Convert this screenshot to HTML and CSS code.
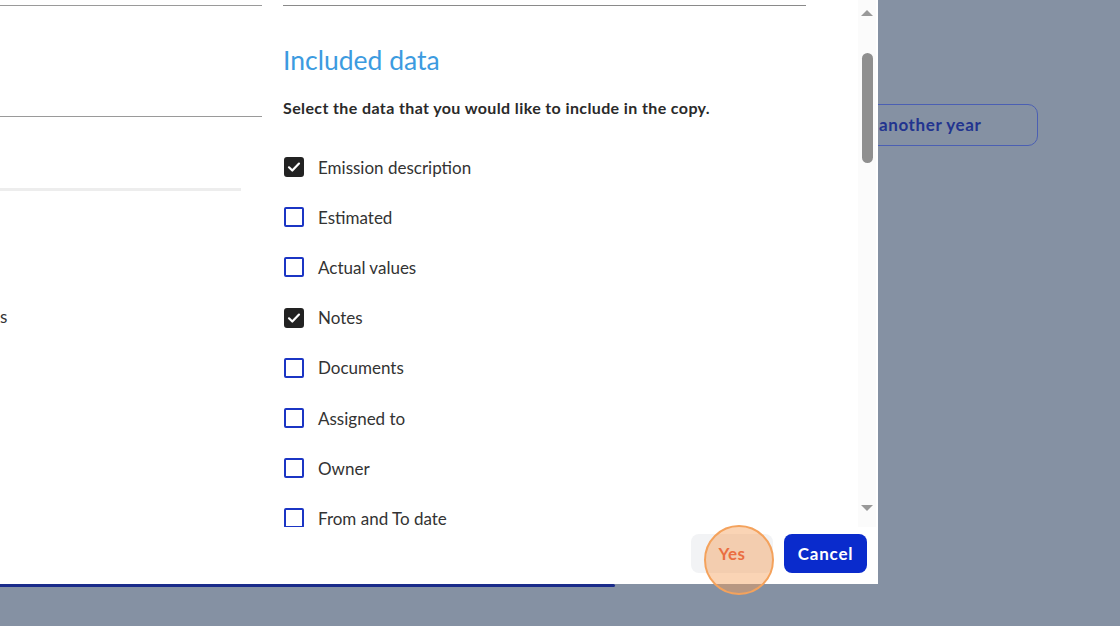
FILE: index.html
```html
<!DOCTYPE html>
<html lang="en">
<head>
<meta charset="utf-8">
<title>Included data</title>
<link rel="stylesheet" href="styles.css">
</head>
<body>
<div class="stage">
  <div class="top">
    <div class="modal">
      <div class="modal-body">
        <div class="backdrop-col">
          <div class="bg-line bg-line-1"></div>
          <div class="bg-line bg-line-2"></div>
          <div class="bg-line bg-line-3"></div>
          <div class="bg-text">s</div>
        </div>
        <div class="scroll-area">
          <div class="content">
            <div class="rule"></div>
            <h2 class="title">Included data</h2>
            <p class="subtitle">Select the data that you would like to include in the copy.</p>
            <ul class="options">
              <li class="option"><span class="box checked"><svg viewBox="0 0 20 20" width="20" height="20"><path d="M5 10.3l3.3 3.2L15 6.6" fill="none" stroke="#fff" stroke-width="2.2" stroke-linecap="round" stroke-linejoin="round"/></svg></span><span class="label">Emission description</span></li>
              <li class="option"><span class="box"></span><span class="label">Estimated</span></li>
              <li class="option"><span class="box"></span><span class="label">Actual values</span></li>
              <li class="option"><span class="box checked"><svg viewBox="0 0 20 20" width="20" height="20"><path d="M5 10.3l3.3 3.2L15 6.6" fill="none" stroke="#fff" stroke-width="2.2" stroke-linecap="round" stroke-linejoin="round"/></svg></span><span class="label">Notes</span></li>
              <li class="option"><span class="box"></span><span class="label">Documents</span></li>
              <li class="option"><span class="box"></span><span class="label">Assigned to</span></li>
              <li class="option"><span class="box"></span><span class="label">Owner</span></li>
              <li class="option"><span class="box"></span><span class="label">From and To date</span></li>
            </ul>
          </div>
          <div class="scrollbar">
            <span class="arrow up"></span>
            <div class="track"><div class="thumb"></div></div>
            <span class="arrow down"></span>
          </div>
        </div>
      </div>
      <div class="footer">
        <button class="btn btn-yes">Yes</button>
        <button class="btn btn-cancel">Cancel</button>
      </div>
      <div class="click-ring"></div>
    </div>
    <div class="page-right">
      <button class="outline-btn">another year</button>
    </div>
  </div>
  <div class="page-bar"></div>
</div>
</body>
</html>
```

FILE: styles.css
```css
* { box-sizing: border-box; }
html, body { margin: 0; padding: 0; }
body {
  width: 1120px;
  height: 626px;
  overflow: hidden;
  background: #8591a3;
  font-family: Lato, "Open Sans", "Liberation Sans", sans-serif;
  color: #2b2b2b;
}
.stage { display: flex; flex-direction: column; }
.top { display: flex; height: 584px; }

.modal {
  position: relative;
  width: 878px;
  height: 584px;
  background: #ffffff;
  display: flex;
  flex-direction: column;
}
.modal-body { display: flex; height: 527px; overflow: hidden; }

.backdrop-col { width: 262px; flex: none; }
.bg-line { height: 1px; background: #9a9a9a; }
.bg-line-1 { margin-top: 5px; }
.bg-line-2 { margin-top: 110px; }
.bg-line-3 { margin-top: 71px; height: 3px; width: 241px; background: #ededed; }
.bg-text { margin-top: 116px; font-size: 17px; line-height: 20px; color: #333; }

.scroll-area { flex: 1; display: flex; }
.content { width: 544px; padding-left: 21px; }
.rule { margin-top: 5px; height: 1px; background: #8a8a8a; }
.title {
  margin: 38px 0 0;
  font-size: 26.5px;
  line-height: 32px;
  font-weight: 400;
  color: #3c9be0;
}
.subtitle {
  margin: 22px 0 0;
  font-size: 16px;
  line-height: 20px;
  font-weight: 700;
  letter-spacing: 0.38px;
  color: #2a2a2a;
}
.options { list-style: none; margin: 24px 0 0; padding: 0; }
.option { height: 50.2px; display: flex; align-items: center; }
.box {
  width: 20px;
  height: 20px;
  margin-left: 1px;
  border: 2px solid #1b35c4;
  border-radius: 2px;
  flex: none;
  display: flex;
  align-items: center;
  justify-content: center;
}
.box.checked { background: #222; border-color: #222; border-radius: 3px; }
.box svg { flex: none; }
.label { margin-left: 14px; font-size: 17px; color: #333; }

.scrollbar {
  margin-left: 52px;
  width: 18px;
  display: flex;
  flex-direction: column;
  align-items: center;
  background: #fbfbfb;
}
.arrow { width: 0; height: 0; border-left: 6px solid transparent; border-right: 6px solid transparent; }
.arrow.up { margin-top: 10px; border-bottom: 6px solid #999; }
.arrow.down { margin-top: auto; margin-bottom: 16px; border-top: 6px solid #999; }
.track { width: 100%; display: flex; justify-content: center; }
.thumb { margin-top: 37px; width: 11px; height: 110px; border-radius: 6px; background: #8f8f8f; }

.footer {
  display: flex;
  justify-content: flex-end;
  gap: 11px;
  padding: 7px 11px 0 0;
}
.btn {
  height: 39px;
  border: none;
  border-radius: 8px;
  font-family: inherit;
  font-size: 17px;
  font-weight: 700;
  padding: 0;
}
.btn-yes { width: 82px; background: #f2f3f5; color: #e2462c; letter-spacing: 0.4px; }
.btn-cancel { width: 83px; background: #0a2bcc; color: #ffffff; letter-spacing: 0.8px; }

.click-ring {
  position: absolute;
  left: 704px;
  top: 525px;
  width: 70px;
  height: 70px;
  border-radius: 50%;
  background: rgba(245, 160, 90, 0.45);
  border: 2px solid #f4a25c;
}

.page-right { flex: 1; overflow: hidden; padding-top: 104px; }
.outline-btn {
  margin-left: -10px;
  width: 170px;
  height: 42px;
  border: 1px solid #4b5fb3;
  border-radius: 10px;
  background: transparent;
  color: #22348f;
  font-family: inherit;
  font-size: 17px;
  font-weight: 700;
  letter-spacing: 0.6px;
  text-align: left;
  padding: 0 0 2px 10px;
}

.page-bar { width: 615px; height: 3px; background: #1a2b8a; border-radius: 0 2px 2px 0; }
```
